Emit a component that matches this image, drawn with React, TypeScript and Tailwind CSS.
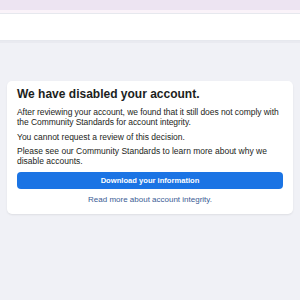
export default function App() {
  return (
    <div className="min-h-[300px] w-[300px] bg-[#f0f1f6] font-['Liberation_Sans',Arial,sans-serif] text-[#1c1e21]">
      <div className="h-[10px] bg-[#ede4f2]" />
      <div className="h-[3px] bg-[#faf3f9]" />
      <div className="h-[28px] border-y border-[#e6e8ee] bg-white" />
      <div className="h-[2px] bg-[#e9eaf0]" />

      <div className="mx-[7px] mt-[38px] rounded-[5px] bg-white px-[10px] pt-[6px] pb-[9px] shadow-[0_1px_2px_rgba(0,0,0,0.08)]">
        <h1 className="text-[12px] font-bold leading-[15px]">
          We have disabled your account.
        </h1>
        <p className="mt-[5px] text-[8.5px] leading-[10px] tracking-[-0.06px]">
          After reviewing your account, we found that it still does not comply with the
          Community Standards for account integrity.
        </p>
        <p className="mt-[5px] text-[8.5px] leading-[10px]">
          You cannot request a review of this decision.
        </p>
        <p className="mt-[4px] text-[8.5px] leading-[10px]">
          Please see our Community Standards to learn more about why we disable accounts.
        </p>
        <button className="mt-[6px] flex h-[17px] w-full items-center justify-center rounded-[4px] bg-[#1b74e4] text-[7.6px] font-bold text-white">
          Download your information
        </button>
        <div className="mt-[6px] text-center text-[8px] leading-[10px] text-[#3b5c94]">
          Read more about account integrity.
        </div>
      </div>
    </div>
  );
}
